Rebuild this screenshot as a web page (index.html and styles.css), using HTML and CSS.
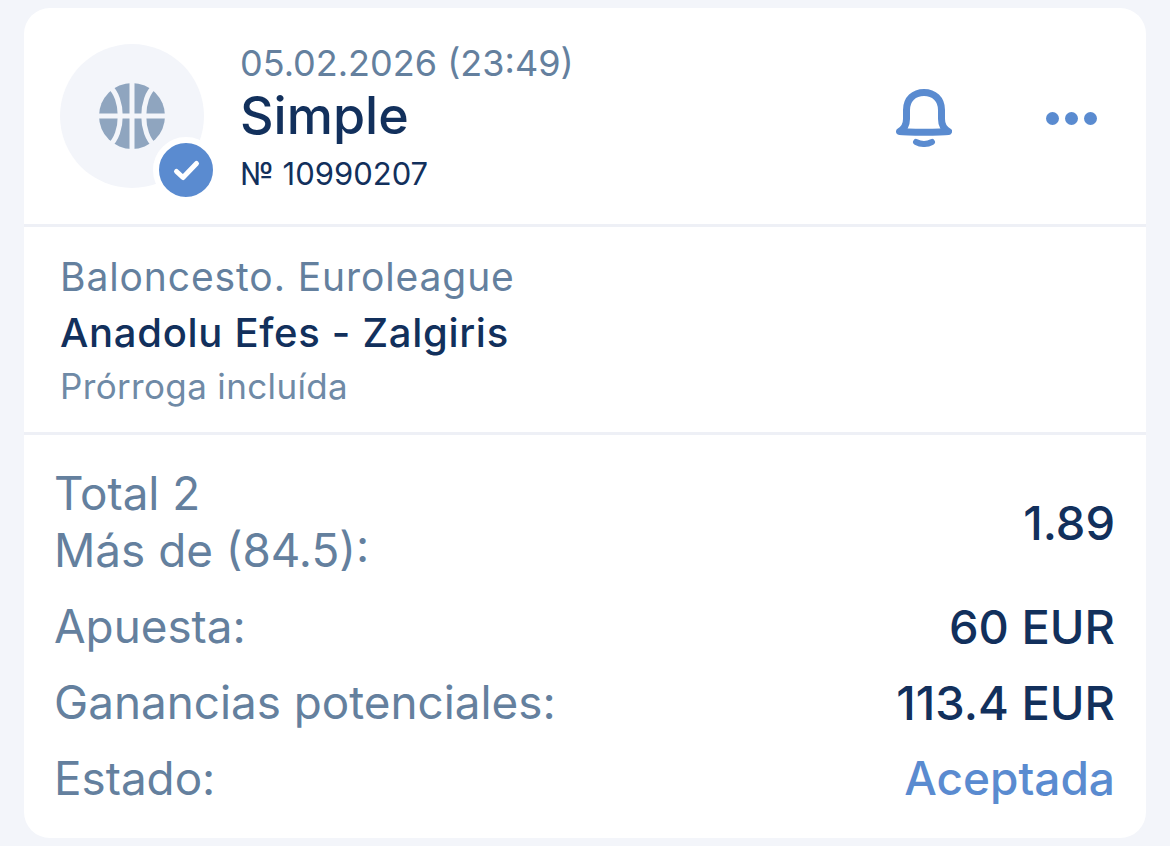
FILE: index.html
```html
<!DOCTYPE html>
<html lang="es">
<head>
    <meta charset="UTF-8">
    <title>Simple</title>
    <link rel="stylesheet" href="styles.css">
</head>
<body>
    <div class="card">
        <div class="head">
            <div class="avatar">
                <svg class="ball" width="84" height="84" viewBox="0 0 84 84">
                    <circle cx="42" cy="42" r="33" fill="#8fa5bf"/>
                    <g fill="none" stroke="#f3f5fa" stroke-width="5">
                        <path d="M42 4V80M4 42H80"/>
                        <path d="M19 12C34 24 34 60 19 72"/>
                        <path d="M65 12C50 24 50 60 65 72"/>
                    </g>
                </svg>
                <div class="badge">
                    <svg width="54" height="54" viewBox="0 0 54 54">
                        <path d="M17.500 28.500L24 34.500L37.500 20.500" fill="none" stroke="#fff" stroke-width="5" stroke-linecap="round" stroke-linejoin="round"/>
                    </svg>
                </div>
            </div>
            <div class="head-text">
                <div class="date">05.02.2026 (23:49)</div>
                <div class="title">Simple</div>
                <div class="number">№ 10990207</div>
            </div>
            <div class="actions">
                <svg class="bell" width="56" height="58" viewBox="0 0 56 58">
                    <path d="M3.500 42.500C8 40 10.500 36 10.500 30V21C10.500 10 18 3.500 28 3.500C38 3.500 45.500 10 45.500 21V30C45.500 36 48 40 52.500 42.500C45 43.500 11 43.500 3.500 42.500Z" fill="none" stroke="#5a8bd0" stroke-width="7" stroke-linejoin="round"/>
                    <path d="M20 53C25 55.500 31 55.500 36 53" fill="none" stroke="#5a8bd0" stroke-width="6" stroke-linecap="round"/>
                </svg>
                <div class="dots"><span></span><span></span><span></span></div>
            </div>
        </div>
        <div class="match">
            <div class="league">Baloncesto. Euroleague</div>
            <div class="teams">Anadolu Efes - Zalgiris</div>
            <div class="note">Prórroga incluída</div>
        </div>
        <div class="details">
            <div class="row row-total">
                <div class="label">Total 2<br>Más de (84.5):</div>
                <div class="value">1.89</div>
            </div>
            <div class="row row-stake">
                <div class="label">Apuesta:</div>
                <div class="value">60 EUR</div>
            </div>
            <div class="row row-win">
                <div class="label">Ganancias potenciales:</div>
                <div class="value">113.4 EUR</div>
            </div>
            <div class="row row-state">
                <div class="label">Estado:</div>
                <div class="value accepted">Aceptada</div>
            </div>
        </div>
    </div>
</body>
</html>
```

FILE: styles.css
```css
html, body {
    height: 100%;
}
body {
    margin: 0;
    padding: 8px 24px 8px;
    box-sizing: border-box;
    background-color: #f3f5fa;
    color: #12305c;
    font-family: Inter, "Liberation Sans", sans-serif;
    overflow: hidden;
}
.card {
    height: 830px;
    background: #fff;
    border-radius: 26px;
}
.head {
    display: flex;
    align-items: center;
    height: 216px;
    padding: 0 36px;
    border-bottom: 3px solid #eef0f6;
}
.avatar {
    position: relative;
    width: 144px;
    height: 144px;
    border-radius: 50%;
    background: #f3f5fa;
    display: flex;
    align-items: center;
    justify-content: center;
    flex-shrink: 0;
}
.badge {
    position: absolute;
    left: 93px;
    top: 93px;
    width: 54px;
    height: 54px;
    border-radius: 50%;
    background: #5a8bd0;
    border: 6px solid #fff;
}
.head-text {
    margin-left: 36px;
    margin-top: 2px;
    flex: 1;
}
.date {
    font-size: 36px;
    line-height: 38px;
    color: #64809e;
}
.title {
    font-size: 52px;
    line-height: 58px;
    font-weight: 500;
    margin-top: 5px;
}
.number {
    font-size: 31px;
    line-height: 34px;
    margin-top: 12px;
}
.actions {
    display: flex;
    align-items: center;
    gap: 94px;
    margin-right: 13px;
    margin-top: 4px;
}
.dots {
    display: flex;
    gap: 6px;
}
.dots span {
    width: 13px;
    height: 13px;
    border-radius: 50%;
    background: #5a8bd0;
}
.match {
    height: 205px;
    padding: 0 36px;
    border-bottom: 3px solid #eef0f6;
}
.league {
    padding-top: 27px;
    font-size: 39px;
    line-height: 46px;
    letter-spacing: 0.9px;
    color: #64809e;
}
.teams {
    font-size: 40px;
    line-height: 46px;
    letter-spacing: 0.7px;
    font-weight: 500;
    margin-top: 10px;
}
.note {
    font-size: 35px;
    line-height: 40px;
    letter-spacing: 0.35px;
    margin-top: 10px;
    color: #6f8aa6;
}
.details {
    padding: 30px 31px 0 30px;
}
.row {
    display: flex;
    align-items: center;
    justify-content: space-between;
}
.label {
    font-size: 45.800px;
    line-height: 57px;
    color: #64809e;
}
.value {
    font-size: 47px;
    line-height: 57px;
    font-weight: 500;
}
.row-stake,
.row-win,
.row-state {
    margin-top: 19px;
}
.accepted {
    font-size: 46px;
    color: #5a8bd0;
}
```
